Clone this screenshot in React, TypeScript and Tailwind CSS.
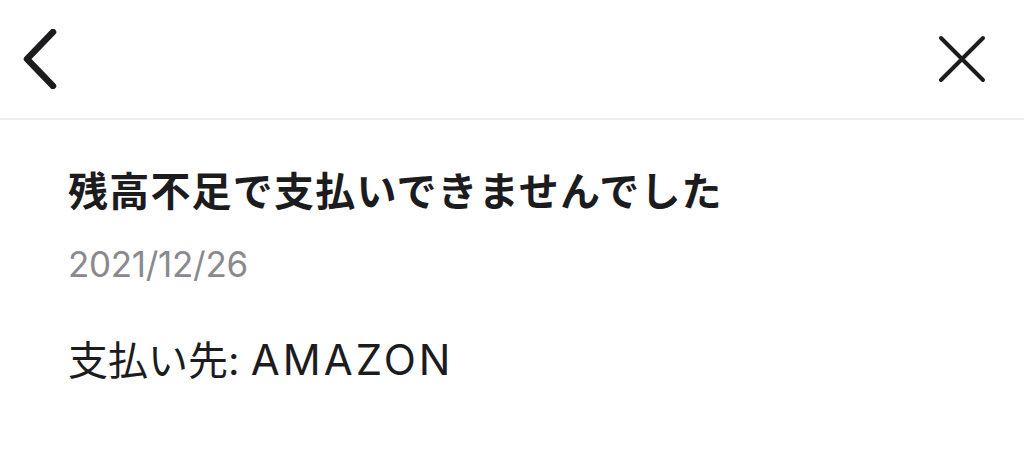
const App = () => {
  return (
    <div
      className="w-[1024px] h-[456px] bg-white text-[#1c1c1e] overflow-hidden"
      style={{ fontFamily: '"Inter", "Noto Sans CJK JP", sans-serif' }}
    >
      <header className="h-[120px] flex items-center justify-between pl-[22px] pr-[38px] border-b-2 border-[#ececf2]">
        <button className="w-[36px] h-[60px] flex items-center">
          <svg width="36" height="60" viewBox="0 0 36 60" fill="none">
            <path
              d="M31 3 L5 30 L31 57"
              stroke="#1c1c1e"
              strokeWidth="6.5"
              strokeLinecap="round"
              strokeLinejoin="round"
            />
          </svg>
        </button>
        <button className="w-[48px] h-[48px] flex items-center justify-center">
          <svg width="48" height="48" viewBox="0 0 48 48" fill="none">
            <path
              d="M3 3 L45 45 M45 3 L3 45"
              stroke="#1c1c1e"
              strokeWidth="4"
              strokeLinecap="round"
            />
          </svg>
        </button>
      </header>
      <main className="px-[68px] pt-[44px]">
        <h1 className="text-[40px] leading-[56px] font-bold tracking-[1.2px]">
          残高不足で支払いできませんでした
        </h1>
        <p className="mt-[22px] text-[35px] leading-[44px] text-[#8a8a8e] tracking-[-0.3px]">
          2021/12/26
        </p>
        <p className="mt-[50px] text-[40px] leading-[48px]">
          支払い先:{" "}
          <span className="text-[42px] tracking-[3px]">AMAZON</span>
        </p>
      </main>
    </div>
  );
};

export default App;
